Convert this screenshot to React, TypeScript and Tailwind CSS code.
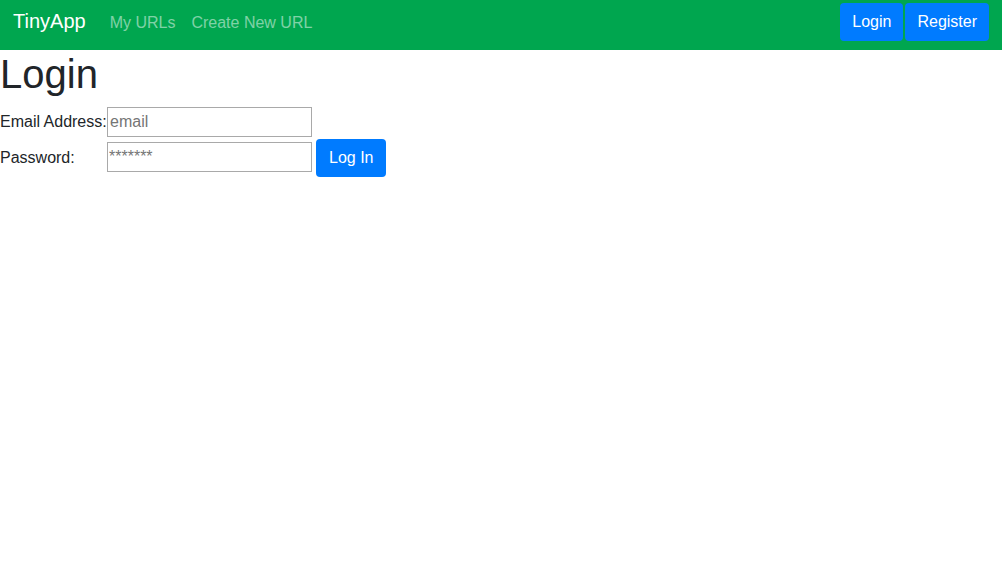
// Login page for TinyApp: green top navbar with brand, nav links and auth
// buttons, followed by a plain heading and a two-row login form.

const font = "font-['Liberation_Sans',Arial,sans-serif]";

function NavBar() {
  return (
    <nav className="flex h-[50px] items-start justify-between bg-[#00a64f] px-[13px]">
      <div className="flex items-baseline pt-[6px] leading-[30px]">
        <a className="mr-[16px] text-[20px] text-white" href="#">
          TinyApp
        </a>
        <a className="px-[8px] text-[16px] text-white/50" href="#">
          My URLs
        </a>
        <a className="px-[8px] text-[16px] text-white/50" href="#">
          Create New URL
        </a>
      </div>
      <div className="flex gap-[2px] pt-[3px]">
        <button className="h-[38px] rounded-[4px] bg-[#007bff] px-[12px] text-[16px] text-white">
          Login
        </button>
        <button className="h-[38px] rounded-[4px] bg-[#007bff] px-[12px] text-[16px] text-white">
          Register
        </button>
      </div>
    </nav>
  );
}

function LoginForm() {
  return (
    <form className="flex flex-col text-[16px] text-[#212529]">
      <div className="flex h-[32px] items-center">
        <label className="w-[107px] shrink-0">Email Address:</label>
        <input
          type="email"
          placeholder="email"
          className="h-[30px] w-[205px] border border-[#a9a9a9] px-[2px] placeholder:text-[#757575] outline-none"
        />
      </div>
      <div className="flex h-[40px] items-center">
        <label className="w-[107px] shrink-0">Password:</label>
        <input
          type="password"
          placeholder="*******"
          className="mb-[2px] h-[30px] w-[205px] border border-[#a9a9a9] px-[1px] placeholder:text-[#757575] outline-none"
        />
        <button
          type="button"
          className="ml-[4px] h-[38px] rounded-[4px] bg-[#007bff] px-[13px] text-white"
        >
          Log In
        </button>
      </div>
    </form>
  );
}

export default function App() {
  return (
    <div className={`min-h-[570px] bg-white ${font}`}>
      <NavBar />
      <h1 className="mb-[8px] text-[40px] leading-[48px] text-[#212529]">Login</h1>
      <LoginForm />
    </div>
  );
}
